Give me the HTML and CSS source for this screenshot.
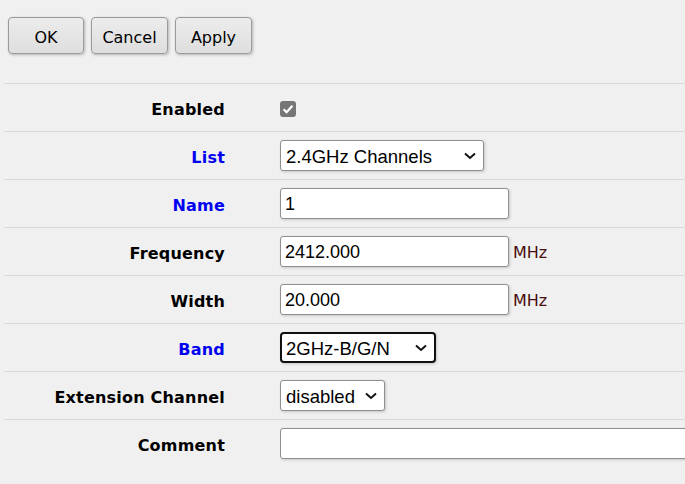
FILE: index.html
```html
<!DOCTYPE html>
<html>
<head>
<meta charset="utf-8">
<link rel="stylesheet" href="styles.css">
</head>
<body>
<div class="toolbar">
  <button class="btn">OK</button>
  <button class="btn">Cancel</button>
  <button class="btn">Apply</button>
</div>
<div class="form">
  <div class="row">
    <div class="label">Enabled</div>
    <div class="field">
      <span class="check"><svg width="16" height="16" viewBox="0 0 16 16"><path d="M3.6 8.2 L6.6 11.2 L12.4 4.8" fill="none" stroke="#fff" stroke-width="2.2"/></svg></span>
    </div>
  </div>
  <div class="row">
    <div class="label blue">List</div>
    <div class="field">
      <span class="sel sel-list"><select><option>2.4GHz Channels</option></select><svg class="chev" width="12" height="8" viewBox="0 0 12 8"><path d="M1 1.5 L6 6 L11 1.5" fill="none" stroke="#111" stroke-width="2"/></svg></span>
    </div>
  </div>
  <div class="row">
    <div class="label blue">Name</div>
    <div class="field"><input class="txt txt-med" value="1"></div>
  </div>
  <div class="row">
    <div class="label">Frequency</div>
    <div class="field"><input class="txt txt-med" value="2412.000"><span class="unit">MHz</span></div>
  </div>
  <div class="row">
    <div class="label">Width</div>
    <div class="field"><input class="txt txt-med" value="20.000"><span class="unit">MHz</span></div>
  </div>
  <div class="row">
    <div class="label blue">Band</div>
    <div class="field">
      <span class="sel sel-band focused"><select><option>2GHz-B/G/N</option></select><svg class="chev" width="12" height="8" viewBox="0 0 12 8"><path d="M1 1.5 L6 6 L11 1.5" fill="none" stroke="#111" stroke-width="2"/></svg></span>
    </div>
  </div>
  <div class="row">
    <div class="label">Extension Channel</div>
    <div class="field">
      <span class="sel sel-ext"><select><option>disabled</option></select><svg class="chev" width="12" height="8" viewBox="0 0 12 8"><path d="M1 1.5 L6 6 L11 1.5" fill="none" stroke="#111" stroke-width="2"/></svg></span>
    </div>
  </div>
  <div class="row">
    <div class="label">Comment</div>
    <div class="field field-clip"><input class="txt txt-wide" value=""></div>
  </div>
</div>
</body>
</html>
```

FILE: styles.css
```css
html, body {
  margin: 0;
  padding: 0;
  background: #f0f0f0;
  overflow: hidden;
}
body {
  width: 685px;
  height: 484px;
  font-family: "DejaVu Sans", Verdana, sans-serif;
}
.toolbar {
  display: flex;
  gap: 7px;
  padding: 17px 0 0 8px;
  height: 83px;
  box-sizing: border-box;
}
.btn {
  width: 77px;
  height: 37px;
  font-family: "DejaVu Sans", Verdana, sans-serif;
  font-size: 16px;
  color: #000;
  background: linear-gradient(#ececec, #dedede);
  border: 1px solid #9a9a9a;
  border-radius: 4px;
  box-shadow: 1px 1px 3px rgba(0, 0, 0, 0.25);
  padding: 3px 0 0 0;
}
.btn:first-child {
  width: 76px;
}
.form {
  margin-left: 4px;
  width: 681px;
}
.row {
  display: flex;
  align-items: center;
  height: 48px;
  box-sizing: border-box;
  border-top: 1px solid #dadada;
}
.label {
  flex-shrink: 0;
  width: 221px;
  text-align: right;
  font-weight: bold;
  font-size: 16px;
  letter-spacing: 0.2px;
  color: #000;
  padding-top: 4px;
}
.label.blue {
  color: #0000f0;
}
.field {
  flex-shrink: 0;
  margin-left: 55px;
  display: flex;
  align-items: center;
}
.field-clip {
  flex: 1 1 0;
  min-width: 0;
  overflow: hidden;
  padding: 4px 0 5px 0;
}
.check {
  display: block;
  width: 16px;
  height: 16px;
  background: #767676;
  border-radius: 3px;
  margin-top: 2px;
}
.check svg {
  display: block;
}
.txt {
  flex-shrink: 0;
  height: 31px;
  box-sizing: border-box;
  border: 1px solid #8f8f8f;
  border-radius: 3px;
  background: #fff;
  box-shadow: 1px 1px 3px rgba(0, 0, 0, 0.18);
  font-family: "Liberation Sans", Arial, sans-serif;
  font-size: 18px;
  color: #000;
  padding: 1px 4px 0 4px;
  margin: 0;
  outline: none;
}
.txt-med {
  width: 229px;
}
.txt-wide {
  width: 460px;
}
.unit {
  margin-left: 4px;
  margin-top: 2px;
  font-size: 16px;
  color: #4a0c0c;
}
.sel {
  position: relative;
  display: block;
  height: 31px;
  box-sizing: border-box;
  border: 1px solid #8f8f8f;
  border-radius: 3px;
  background: #fff;
  box-shadow: 1px 1px 3px rgba(0, 0, 0, 0.18);
}
.sel select {
  appearance: none;
  -webkit-appearance: none;
  border: none;
  background: transparent;
  width: 100%;
  height: 100%;
  font-family: "Liberation Sans", Arial, sans-serif;
  font-size: 18.5px;
  color: #000;
  padding: 1px 0 0 5px;
  margin: 0;
  outline: none;
}
.sel .chev {
  position: absolute;
  right: 7px;
  top: 11px;
}
.sel-list {
  width: 204px;
}
.sel-band {
  width: 156px;
}
.sel-ext {
  width: 105px;
}
.sel.focused {
  border: 2px solid #101010;
  border-radius: 4px;
}
.sel.focused select {
  padding-left: 4px;
}
.sel.focused .chev {
  right: 7px;
  top: 10px;
}
```
